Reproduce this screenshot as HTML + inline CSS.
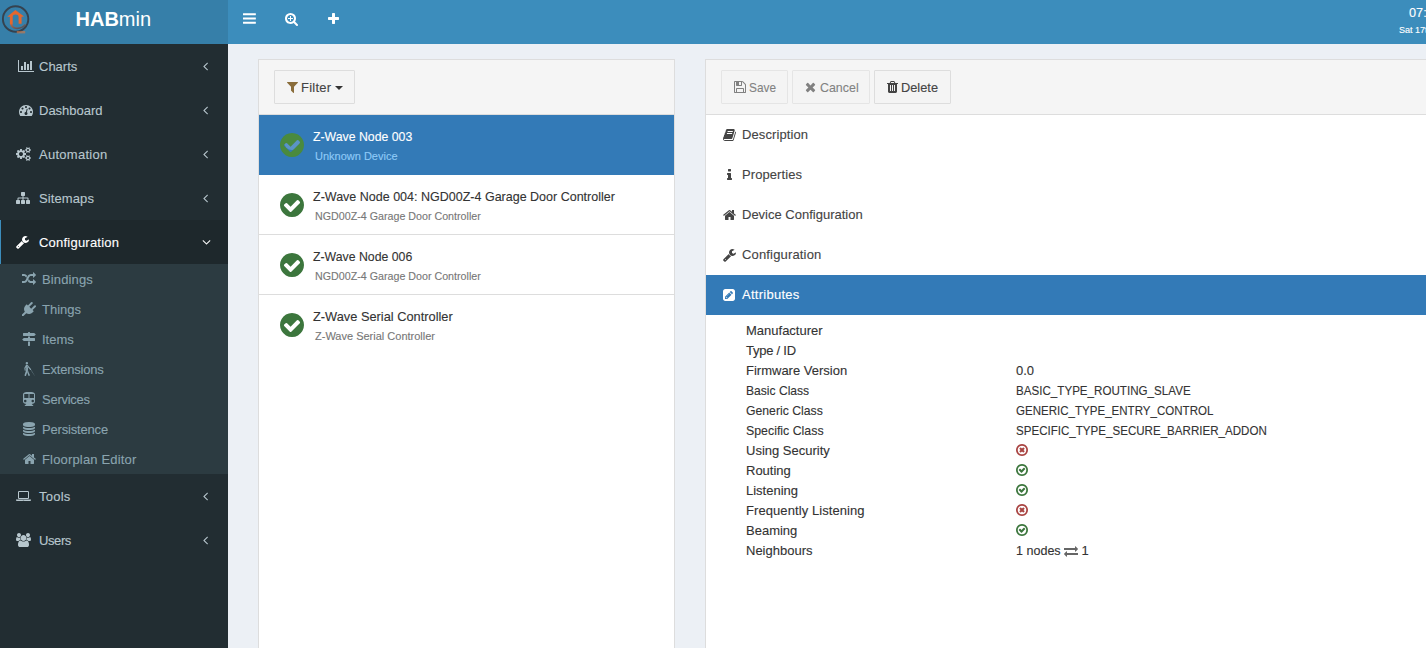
<!DOCTYPE html>
<html lang="en">
<head>
<meta charset="utf-8">
<title>HABmin</title>
<style>
*{box-sizing:border-box}
html,body{margin:0;padding:0}
body{width:1426px;height:648px;overflow:hidden;position:relative;background:#ecf0f5;
 font-family:"Liberation Sans",sans-serif;font-size:13px;color:#333;-webkit-font-smoothing:antialiased;-webkit-text-stroke:.12px currentColor}
.abs{position:absolute}
svg.i{display:block;overflow:visible}
.fw{display:inline-block;text-align:center}
.fw svg.i{display:inline-block}
.t{position:absolute;white-space:nowrap;line-height:1}
/* header */
#logo{position:absolute;left:0;top:0;width:228px;height:44px;background:#367fa9}
#nav{position:absolute;left:228px;top:0;width:1198px;height:44px;background:#3c8dbc}
#brand{-webkit-text-stroke:0;position:absolute;left:75.5px;top:7px;font-size:20px;line-height:24px;color:#fff;white-space:nowrap}
#brand b{font-weight:700}
/* sidebar */
#side{position:absolute;left:0;top:44px;width:228px;height:604px;background:#222d32}
.mi{position:absolute;left:0;width:228px;height:44px;color:#b8c7ce}
.mi.act{background:#1e282c;color:#fff;border-left:1px solid #3c8dbc}
.mi .ic{position:absolute;left:16px;top:15px;width:20px;height:14px;text-align:left}
.mi .ic.c{left:17px;width:18px;text-align:center}
.mi .ic svg{display:inline-block}
.mi .tx{position:absolute;left:39px;top:16px;font-size:13px;line-height:14px;white-space:nowrap}
.mi .ch{position:absolute;left:203px;top:15px}
#sub{position:absolute;left:0;top:220px;width:228px;height:210px;background:#2c3b41}
.si{position:absolute;left:0;width:228px;height:30px;color:#8aa4af}
.si .ic{position:absolute;left:20px;top:8px;width:18px;height:14px;text-align:center}
.si .ic svg{display:inline-block}
.si .tx{position:absolute;left:42px;top:8.6px;font-size:13px;line-height:14px;white-space:nowrap}
/* panels */
.panel{position:absolute;background:#fff;border:1px solid #ddd}
.ph{position:absolute;left:0;top:0;right:0;height:55px;background:#f5f5f5;border-bottom:1px solid #ddd}
.btn{position:absolute;top:10px;height:34px;border:1px solid #ddd;background:#f4f4f4;border-radius:1px;color:#444}
.btn.dis{opacity:.65}
.li{position:absolute;left:0;width:415px;height:60px;border-bottom:1px solid #ddd;background:#fff}
.li.last{border-bottom-color:#fff}
.li.act{background:#337ab7;border-color:#337ab7}
.li .ttl{position:absolute;left:54px;top:14px;font-size:13px;line-height:16px;white-space:nowrap;color:#333}
.li .subt{position:absolute;left:56px;top:35px;font-size:11px;line-height:12px;white-space:nowrap;color:#777}
.li.act .ttl{color:#fff}
.li.act .subt{color:#8fcaf7}
.li .ck{position:absolute;left:21px;top:16px}
.acc{position:absolute;left:0;width:720px;height:40px}
.acc.act{background:#337ab7}
.acc .ic{position:absolute;left:14.3px;top:13px;width:18px;height:14px;text-align:center}
.acc .ic svg{display:inline-block}
.acc .tx{position:absolute;left:36px;top:12px;font-size:13px;line-height:16px;white-space:nowrap;color:#444}
.acc.act .tx{color:#fff}
.row{position:absolute;left:40px;height:20px;width:680px;font-size:13px;line-height:20px;white-space:nowrap;color:#333}
.row .v{position:absolute;left:270px;top:0}

</style>
</head>
<body>
<div id="logo">
  <svg class="abs" style="left:0;top:4px" width="32" height="32" viewBox="0 0 32 32">
    <defs><linearGradient id="lg" x1="0" y1="0" x2="1" y2="1"><stop offset="0" stop-color="#e0642e"/><stop offset="1" stop-color="#3a4450"/></linearGradient></defs>
    <circle cx="15.6" cy="15" r="12.7" fill="none" stroke="#35424f" stroke-width="1.9"/>
    <path d="M7.2 12.8 L15.4 6.0 L24.1 12.5 L21.6 12.7 L21.6 19.8 L18.6 19.8 L18.6 13 Q18.4 10.6 15.6 10.6 Q12.8 10.6 12.7 13 L12.7 20.4 L9.9 20.4 L9.9 12.8 Z" fill="#e5672d"/>
    <path d="M11.3 19.5 Q11.2 23.2 15.5 24.2 Q21.5 25 25.5 20.5" fill="none" stroke="url(#lg)" stroke-width="1.7" opacity=".85"/>
    <rect x="16.8" y="27" width="8.4" height="2.4" fill="#d9763f" opacity=".6"/>
  </svg>
  <div id="brand"><b>HAB</b>min</div>
</div>
<div id="nav">
  <div class="abs" style="left:14.7px;top:11.3px"><svg class="i" width="12.86" height="15.0" viewBox="0 -1536 1536 1792" style="fill:#fff;"><path transform="scale(1,-1)" d="M1536 192v-128q0 -26 -19 -45t-45 -19h-1408q-26 0 -45 19t-19 45v128q0 26 19 45t45 19h1408q26 0 45 -19t19 -45zM1536 704v-128q0 -26 -19 -45t-45 -19h-1408q-26 0 -45 19t-19 45v128q0 26 19 45t45 19h1408q26 0 45 -19t19 -45zM1536 1216v-128q0 -26 -19 -45 t-45 -19h-1408q-26 0 -45 19t-19 45v128q0 26 19 45t45 19h1408q26 0 45 -19t19 -45z"/></svg></div>
  <div class="abs" style="left:57px;top:12px"><svg class="i" width="13.00" height="14.0" viewBox="0 -1536 1664 1792" style="fill:#fff;"><path transform="scale(1,-1)" d="M1024 736v-64q0 -13 -9.5 -22.5t-22.5 -9.5h-224v-224q0 -13 -9.5 -22.5t-22.5 -9.5h-64q-13 0 -22.5 9.5t-9.5 22.5v224h-224q-13 0 -22.5 9.5t-9.5 22.5v64q0 13 9.5 22.5t22.5 9.5h224v224q0 13 9.5 22.5t22.5 9.5h64q13 0 22.5 -9.5t9.5 -22.5v-224h224 q13 0 22.5 -9.5t9.5 -22.5zM1152 704q0 185 -131.5 316.5t-316.5 131.5t-316.5 -131.5t-131.5 -316.5t131.5 -316.5t316.5 -131.5t316.5 131.5t131.5 316.5zM1664 -128q0 -53 -37.5 -90.5t-90.5 -37.5q-54 0 -90 38l-343 342q-179 -124 -399 -124q-143 0 -273.5 55.5 t-225 150t-150 225t-55.5 273.5t55.5 273.5t150 225t225 150t273.5 55.5t273.5 -55.5t225 -150t150 -225t55.5 -273.5q0 -220 -124 -399l343 -343q37 -37 37 -90z"/></svg></div>
  <div class="abs" style="left:100px;top:12px"><svg class="i" width="11.00" height="14.0" viewBox="0 -1536 1408 1792" style="fill:#fff;"><path transform="scale(1,-1)" d="M1408 800v-192q0 -40 -28 -68t-68 -28h-416v-416q0 -40 -28 -68t-68 -28h-192q-40 0 -68 28t-28 68v416h-416q-40 0 -68 28t-28 68v192q0 40 28 68t68 28h416v416q0 40 28 68t68 28h192q40 0 68 -28t28 -68v-416h416q40 0 68 -28t28 -68z"/></svg></div>
  <div class="t" style="left:1181.3px;top:6.6px;font-size:12px;color:#fff"><span style="display:inline-block;transform:scaleX(1.06);transform-origin:0 50%">07:</span></div>
  <div class="t" style="left:1171px;top:25px;font-size:9.5px;color:#fff"><span style="display:inline-block;transform:scaleX(.95);transform-origin:0 50%">Sat 17th</span></div>
</div>
<div id="side">
  <div class="mi" style="top:0"><span class="ic c"><svg class="i" width="16.00" height="14.0" viewBox="0 -1536 2048 1792" style="fill:#b8c7ce;"><path transform="scale(1,-1)" d="M640 640v-512h-256v512h256zM1024 1152v-1024h-256v1024h256zM2048 0v-128h-2048v1536h128v-1408h1920zM1408 896v-768h-256v768h256zM1792 1280v-1152h-256v1152h256z"/></svg></span><span class="tx">Charts</span><span class="ch"><svg class="i" width="5.00" height="14.0" viewBox="0 -1536 640 1792" style="fill:#b8c7ce;"><path transform="scale(1,-1)" d="M627 992q0 -13 -10 -23l-393 -393l393 -393q10 -10 10 -23t-10 -23l-50 -50q-10 -10 -23 -10t-23 10l-466 466q-10 10 -10 23t10 23l466 466q10 10 23 10t23 -10l50 -50q10 -10 10 -23z"/></svg></span></div>
  <div class="mi" style="top:44px"><span class="ic c"><svg class="i" width="14.00" height="14.0" viewBox="0 -1536 1792 1792" style="fill:#b8c7ce;"><path transform="scale(1,-1)" d="M384 384q0 53 -37.5 90.5t-90.5 37.5t-90.5 -37.5t-37.5 -90.5t37.5 -90.5t90.5 -37.5t90.5 37.5t37.5 90.5zM576 832q0 53 -37.5 90.5t-90.5 37.5t-90.5 -37.5t-37.5 -90.5t37.5 -90.5t90.5 -37.5t90.5 37.5t37.5 90.5zM1004 351l101 382q6 26 -7.5 48.5t-38.5 29.5 t-48 -6.5t-30 -39.5l-101 -382q-60 -5 -107 -43.5t-63 -98.5q-20 -77 20 -146t117 -89t146 20t89 117q16 60 -6 117t-72 91zM1664 384q0 53 -37.5 90.5t-90.5 37.5t-90.5 -37.5t-37.5 -90.5t37.5 -90.5t90.5 -37.5t90.5 37.5t37.5 90.5zM1024 1024q0 53 -37.5 90.5 t-90.5 37.5t-90.5 -37.5t-37.5 -90.5t37.5 -90.5t90.5 -37.5t90.5 37.5t37.5 90.5zM1472 832q0 53 -37.5 90.5t-90.5 37.5t-90.5 -37.5t-37.5 -90.5t37.5 -90.5t90.5 -37.5t90.5 37.5t37.5 90.5zM1792 384q0 -261 -141 -483q-19 -29 -54 -29h-1402q-35 0 -54 29 q-141 221 -141 483q0 182 71 348t191 286t286 191t348 71t348 -71t286 -191t191 -286t71 -348z"/></svg></span><span class="tx">Dashboard</span><span class="ch"><svg class="i" width="5.00" height="14.0" viewBox="0 -1536 640 1792" style="fill:#b8c7ce;"><path transform="scale(1,-1)" d="M627 992q0 -13 -10 -23l-393 -393l393 -393q10 -10 10 -23t-10 -23l-50 -50q-10 -10 -23 -10t-23 10l-466 466q-10 10 -10 23t10 23l466 466q10 10 23 10t23 -10l50 -50q10 -10 10 -23z"/></svg></span></div>
  <div class="mi" style="top:88px"><span class="ic"><svg class="i" width="15.00" height="14.0" viewBox="0 -1536 1920 1792" style="fill:#b8c7ce;"><path transform="scale(1,-1)" d="M896 640q0 106 -75 181t-181 75t-181 -75t-75 -181t75 -181t181 -75t181 75t75 181zM1664 128q0 52 -38 90t-90 38t-90 -38t-38 -90q0 -53 37.5 -90.5t90.5 -37.5t90.5 37.5t37.5 90.5zM1664 1152q0 52 -38 90t-90 38t-90 -38t-38 -90q0 -53 37.5 -90.5t90.5 -37.5 t90.5 37.5t37.5 90.5zM1280 731v-185q0 -10 -7 -19.5t-16 -10.5l-155 -24q-11 -35 -32 -76q34 -48 90 -115q7 -11 7 -20q0 -12 -7 -19q-23 -30 -82.5 -89.5t-78.5 -59.5q-11 0 -21 7l-115 90q-37 -19 -77 -31q-11 -108 -23 -155q-7 -24 -30 -24h-186q-11 0 -20 7.5t-10 17.5 l-23 153q-34 10 -75 31l-118 -89q-7 -7 -20 -7q-11 0 -21 8q-144 133 -144 160q0 9 7 19q10 14 41 53t47 61q-23 44 -35 82l-152 24q-10 1 -17 9.5t-7 19.5v185q0 10 7 19.5t16 10.5l155 24q11 35 32 76q-34 48 -90 115q-7 11 -7 20q0 12 7 20q22 30 82 89t79 59q11 0 21 -7 l115 -90q34 18 77 32q11 108 23 154q7 24 30 24h186q11 0 20 -7.5t10 -17.5l23 -153q34 -10 75 -31l118 89q8 7 20 7q11 0 21 -8q144 -133 144 -160q0 -8 -7 -19q-12 -16 -42 -54t-45 -60q23 -48 34 -82l152 -23q10 -2 17 -10.5t7 -19.5zM1920 198v-140q0 -16 -149 -31 q-12 -27 -30 -52q51 -113 51 -138q0 -4 -4 -7q-122 -71 -124 -71q-8 0 -46 47t-52 68q-20 -2 -30 -2t-30 2q-14 -21 -52 -68t-46 -47q-2 0 -124 71q-4 3 -4 7q0 25 51 138q-18 25 -30 52q-149 15 -149 31v140q0 16 149 31q13 29 30 52q-51 113 -51 138q0 4 4 7q4 2 35 20 t59 34t30 16q8 0 46 -46.5t52 -67.5q20 2 30 2t30 -2q51 71 92 112l6 2q4 0 124 -70q4 -3 4 -7q0 -25 -51 -138q17 -23 30 -52q149 -15 149 -31zM1920 1222v-140q0 -16 -149 -31q-12 -27 -30 -52q51 -113 51 -138q0 -4 -4 -7q-122 -71 -124 -71q-8 0 -46 47t-52 68 q-20 -2 -30 -2t-30 2q-14 -21 -52 -68t-46 -47q-2 0 -124 71q-4 3 -4 7q0 25 51 138q-18 25 -30 52q-149 15 -149 31v140q0 16 149 31q13 29 30 52q-51 113 -51 138q0 4 4 7q4 2 35 20t59 34t30 16q8 0 46 -46.5t52 -67.5q20 2 30 2t30 -2q51 71 92 112l6 2q4 0 124 -70 q4 -3 4 -7q0 -25 -51 -138q17 -23 30 -52q149 -15 149 -31z"/></svg></span><span class="tx"><span style="letter-spacing:.27px">Automation</span></span><span class="ch"><svg class="i" width="5.00" height="14.0" viewBox="0 -1536 640 1792" style="fill:#b8c7ce;"><path transform="scale(1,-1)" d="M627 992q0 -13 -10 -23l-393 -393l393 -393q10 -10 10 -23t-10 -23l-50 -50q-10 -10 -23 -10t-23 10l-466 466q-10 10 -10 23t10 23l466 466q10 10 23 10t23 -10l50 -50q10 -10 10 -23z"/></svg></span></div>
  <div class="mi" style="top:132px"><span class="ic"><svg class="i" width="14.00" height="14.0" viewBox="0 -1536 1792 1792" style="fill:#b8c7ce;"><path transform="scale(1,-1)" d="M1792 288v-320q0 -40 -28 -68t-68 -28h-320q-40 0 -68 28t-28 68v320q0 40 28 68t68 28h96v192h-512v-192h96q40 0 68 -28t28 -68v-320q0 -40 -28 -68t-68 -28h-320q-40 0 -68 28t-28 68v320q0 40 28 68t68 28h96v192h-512v-192h96q40 0 68 -28t28 -68v-320 q0 -40 -28 -68t-68 -28h-320q-40 0 -68 28t-28 68v320q0 40 28 68t68 28h96v192q0 52 38 90t90 38h512v192h-96q-40 0 -68 28t-28 68v320q0 40 28 68t68 28h320q40 0 68 -28t28 -68v-320q0 -40 -28 -68t-68 -28h-96v-192h512q52 0 90 -38t38 -90v-192h96q40 0 68 -28t28 -68 z"/></svg></span><span class="tx"><span style="letter-spacing:.1px">Sitemaps</span></span><span class="ch"><svg class="i" width="5.00" height="14.0" viewBox="0 -1536 640 1792" style="fill:#b8c7ce;"><path transform="scale(1,-1)" d="M627 992q0 -13 -10 -23l-393 -393l393 -393q10 -10 10 -23t-10 -23l-50 -50q-10 -10 -23 -10t-23 10l-466 466q-10 10 -10 23t10 23l466 466q10 10 23 10t23 -10l50 -50q10 -10 10 -23z"/></svg></span></div>
  <div class="mi act" style="top:176px"><span class="ic" style="left:15px"><svg class="i" width="13.00" height="14.0" viewBox="0 -1536 1664 1792" style="fill:#fff;"><path transform="scale(1,-1)" d="M384 64q0 26 -19 45t-45 19t-45 -19t-19 -45t19 -45t45 -19t45 19t19 45zM1028 484l-682 -682q-37 -37 -90 -37q-52 0 -91 37l-106 108q-38 36 -38 90q0 53 38 91l681 681q39 -98 114.5 -173.5t173.5 -114.5zM1662 919q0 -39 -23 -106q-47 -134 -164.5 -217.5 t-258.5 -83.5q-185 0 -316.5 131.5t-131.5 316.5t131.5 316.5t316.5 131.5q58 0 121.5 -16.5t107.5 -46.5q16 -11 16 -28t-16 -28l-293 -169v-224l193 -107q5 3 79 48.5t135.5 81t70.5 35.5q15 0 23.5 -10t8.5 -25z"/></svg></span><span class="tx" style="left:38px"><span style="letter-spacing:.22px">Configuration</span></span><span class="ch" style="left:201px"><svg class="i" width="9.00" height="14.0" viewBox="0 -1536 1152 1792" style="fill:#fff;"><path transform="scale(1,-1)" d="M1075 800q0 -13 -10 -23l-466 -466q-10 -10 -23 -10t-23 10l-466 466q-10 10 -10 23t10 23l50 50q10 10 23 10t23 -10l393 -393l393 393q10 10 23 10t23 -10l50 -50q10 -10 10 -23z"/></svg></span></div>
  <div id="sub">
    <div class="si" style="top:0"><span class="ic"><svg class="i" width="14.00" height="14.0" viewBox="0 -1536 1792 1792" style="fill:#8aa4af;"><path transform="scale(1,-1)" d="M666 1055q-60 -92 -137 -273q-22 45 -37 72.5t-40.5 63.5t-51 56.5t-63 35t-81.5 14.5h-224q-14 0 -23 9t-9 23v192q0 14 9 23t23 9h224q250 0 410 -225zM1792 256q0 -14 -9 -23l-320 -320q-9 -9 -23 -9q-13 0 -22.5 9.5t-9.5 22.5v192q-32 0 -85 -0.5t-81 -1t-73 1 t-71 5t-64 10.5t-63 18.5t-58 28.5t-59 40t-55 53.5t-56 69.5q59 93 136 273q22 -45 37 -72.5t40.5 -63.5t51 -56.5t63 -35t81.5 -14.5h256v192q0 14 9 23t23 9q12 0 24 -10l319 -319q9 -9 9 -23zM1792 1152q0 -14 -9 -23l-320 -320q-9 -9 -23 -9q-13 0 -22.5 9.5t-9.5 22.5 v192h-256q-48 0 -87 -15t-69 -45t-51 -61.5t-45 -77.5q-32 -62 -78 -171q-29 -66 -49.5 -111t-54 -105t-64 -100t-74 -83t-90 -68.5t-106.5 -42t-128 -16.5h-224q-14 0 -23 9t-9 23v192q0 14 9 23t23 9h224q48 0 87 15t69 45t51 61.5t45 77.5q32 62 78 171q29 66 49.5 111 t54 105t64 100t74 83t90 68.5t106.5 42t128 16.5h256v192q0 14 9 23t23 9q12 0 24 -10l319 -319q9 -9 9 -23z"/></svg></span><span class="tx"><span style="letter-spacing:.14px">Bindings</span></span></div>
    <div class="si" style="top:30px"><span class="ic"><svg class="i" width="14.00" height="14.0" viewBox="0 -1536 1792 1792" style="fill:#8aa4af;"><path transform="scale(1,-1)" d="M1755 1083q37 -38 37 -90.5t-37 -90.5l-401 -400l150 -150l-160 -160q-163 -163 -389.5 -186.5t-411.5 100.5l-362 -362h-181v181l362 362q-124 185 -100.5 411.5t186.5 389.5l160 160l150 -150l400 401q38 37 91 37t90 -37t37 -90.5t-37 -90.5l-400 -401l234 -234 l401 400q38 37 91 37t90 -37z"/></svg></span><span class="tx">Things</span></div>
    <div class="si" style="top:60px"><span class="ic"><svg class="i" width="14.00" height="14.0" viewBox="0 -1536 1792 1792" style="fill:#8aa4af;"><path transform="scale(1,-1)" d="M1745 1239q10 -10 10 -23t-10 -23l-141 -141q-28 -28 -68 -28h-1344q-26 0 -45 19t-19 45v256q0 26 19 45t45 19h576v64q0 26 19 45t45 19h128q26 0 45 -19t19 -45v-64h512q40 0 68 -28zM768 320h256v-512q0 -26 -19 -45t-45 -19h-128q-26 0 -45 19t-19 45v512zM1600 768 q26 0 45 -19t19 -45v-256q0 -26 -19 -45t-45 -19h-1344q-40 0 -68 28l-141 141q-10 10 -10 23t10 23l141 141q28 28 68 28h512v192h256v-192h576z"/></svg></span><span class="tx">Items</span></div>
    <div class="si" style="top:90px"><span class="ic"><svg class="i" width="11.00" height="14.0" viewBox="0 -1536 1408 1792" style="fill:#8aa4af;"><path transform="scale(1,-1)" d="M366 1225q-64 0 -110 45.5t-46 110.5q0 64 46 109.5t110 45.5t109.5 -45.5t45.5 -109.5q0 -65 -45.5 -110.5t-109.5 -45.5zM917 583q0 -50 -30 -67.5t-63.5 -6.5t-47.5 34l-367 438q-7 12 -14 15.5t-11 1.5l-3 -3q-7 -8 4 -21l122 -139l1 -354l-161 -457 q-67 -192 -92 -234q-15 -26 -28 -32q-50 -26 -103 -1q-29 13 -41.5 43t-9.5 57q2 17 197 618l5 416l-85 -164l35 -222q4 -24 -1 -42t-14 -27.5t-19 -16t-17 -7.5l-7 -2q-19 -3 -34.5 3t-24 16t-14 22t-7.5 19.5t-2 9.5l-46 299l211 381q23 34 113 34q75 0 107 -40l424 -521 q7 -5 14 -17l3 -3l-1 -1q7 -13 7 -29zM514 433q43 -113 88.5 -225t69.5 -168l24 -55q36 -93 42 -125q11 -70 -36 -97q-35 -22 -66 -16t-51 22t-29 35h-1q-6 16 -8 25l-124 351zM1338 -159q31 -49 31 -57q0 -5 -3 -7q-9 -5 -14.5 0.5t-15.5 26t-16 30.5q-114 172 -423 661 q3 -1 7 1t7 4l3 2q11 9 11 17z"/></svg></span><span class="tx"><span style="letter-spacing:-.2px">Extensions</span></span></div>
    <div class="si" style="top:120px"><span class="ic"><svg class="i" width="12.00" height="14.0" viewBox="0 -1536 1536 1792" style="fill:#8aa4af;"><path transform="scale(1,-1)" d="M1088 1536q185 0 316.5 -93.5t131.5 -226.5v-896q0 -130 -125.5 -222t-305.5 -97l213 -202q16 -15 8 -35t-30 -20h-1056q-22 0 -30 20t8 35l213 202q-180 5 -305.5 97t-125.5 222v896q0 133 131.5 226.5t316.5 93.5h640zM288 224q66 0 113 47t47 113t-47 113t-113 47 t-113 -47t-47 -113t47 -113t113 -47zM704 768v512h-544v-512h544zM1248 224q66 0 113 47t47 113t-47 113t-113 47t-113 -47t-47 -113t47 -113t113 -47zM1408 768v512h-576v-512h576z"/></svg></span><span class="tx"><span style="letter-spacing:-.26px">Services</span></span></div>
    <div class="si" style="top:150px"><span class="ic"><svg class="i" width="12.00" height="14.0" viewBox="0 -1536 1536 1792" style="fill:#8aa4af;"><path transform="scale(1,-1)" d="M768 768q237 0 443 43t325 127v-170q0 -69 -103 -128t-280 -93.5t-385 -34.5t-385 34.5t-280 93.5t-103 128v170q119 -84 325 -127t443 -43zM768 0q237 0 443 43t325 127v-170q0 -69 -103 -128t-280 -93.5t-385 -34.5t-385 34.5t-280 93.5t-103 128v170q119 -84 325 -127 t443 -43zM768 384q237 0 443 43t325 127v-170q0 -69 -103 -128t-280 -93.5t-385 -34.5t-385 34.5t-280 93.5t-103 128v170q119 -84 325 -127t443 -43zM768 1536q208 0 385 -34.5t280 -93.5t103 -128v-128q0 -69 -103 -128t-280 -93.5t-385 -34.5t-385 34.5t-280 93.5 t-103 128v128q0 69 103 128t280 93.5t385 34.5z"/></svg></span><span class="tx"><span style="letter-spacing:-.18px">Persistence</span></span></div>
    <div class="si" style="top:180px"><span class="ic"><svg class="i" width="13.00" height="14.0" viewBox="0 -1536 1664 1792" style="fill:#8aa4af;"><path transform="scale(1,-1)" d="M1408 544v-480q0 -26 -19 -45t-45 -19h-384v384h-256v-384h-384q-26 0 -45 19t-19 45v480q0 1 0.5 3t0.5 3l575 474l575 -474q1 -2 1 -6zM1631 613l-62 -74q-8 -9 -21 -11h-3q-13 0 -21 7l-692 577l-692 -577q-12 -8 -24 -7q-13 2 -21 11l-62 74q-8 10 -7 23.5t11 21.5 l719 599q32 26 76 26t76 -26l244 -204v195q0 14 9 23t23 9h192q14 0 23 -9t9 -23v-408l219 -182q10 -8 11 -21.5t-7 -23.5z"/></svg></span><span class="tx"><span style="letter-spacing:.17px">Floorplan Editor</span></span></div>
  </div>
  <div class="mi" style="top:430px"><span class="ic"><svg class="i" width="15.00" height="14.0" viewBox="0 -1536 1920 1792" style="fill:#b8c7ce;"><path transform="scale(1,-1)" d="M416 256q-66 0 -113 47t-47 113v704q0 66 47 113t113 47h1088q66 0 113 -47t47 -113v-704q0 -66 -47 -113t-113 -47h-1088zM384 1120v-704q0 -13 9.5 -22.5t22.5 -9.5h1088q13 0 22.5 9.5t9.5 22.5v704q0 13 -9.5 22.5t-22.5 9.5h-1088q-13 0 -22.5 -9.5t-9.5 -22.5z M1760 192h160v-96q0 -40 -47 -68t-113 -28h-1600q-66 0 -113 28t-47 68v96h160h1600zM1040 96q16 0 16 16t-16 16h-160q-16 0 -16 -16t16 -16h160z"/></svg></span><span class="tx"><span style="letter-spacing:.25px">Tools</span></span><span class="ch"><svg class="i" width="5.00" height="14.0" viewBox="0 -1536 640 1792" style="fill:#b8c7ce;"><path transform="scale(1,-1)" d="M627 992q0 -13 -10 -23l-393 -393l393 -393q10 -10 10 -23t-10 -23l-50 -50q-10 -10 -23 -10t-23 10l-466 466q-10 10 -10 23t10 23l466 466q10 10 23 10t23 -10l50 -50q10 -10 10 -23z"/></svg></span></div>
  <div class="mi" style="top:474px"><span class="ic"><svg class="i" width="15.00" height="14.0" viewBox="0 -1536 1920 1792" style="fill:#b8c7ce;"><path transform="scale(1,-1)" d="M593 640q-162 -5 -265 -128h-134q-82 0 -138 40.5t-56 118.5q0 353 124 353q6 0 43.5 -21t97.5 -42.5t119 -21.5q67 0 133 23q-5 -37 -5 -66q0 -139 81 -256zM1664 3q0 -120 -73 -189.5t-194 -69.5h-874q-121 0 -194 69.5t-73 189.5q0 53 3.5 103.5t14 109t26.5 108.5 t43 97.5t62 81t85.5 53.5t111.5 20q10 0 43 -21.5t73 -48t107 -48t135 -21.5t135 21.5t107 48t73 48t43 21.5q61 0 111.5 -20t85.5 -53.5t62 -81t43 -97.5t26.5 -108.5t14 -109t3.5 -103.5zM640 1280q0 -106 -75 -181t-181 -75t-181 75t-75 181t75 181t181 75t181 -75 t75 -181zM1344 896q0 -159 -112.5 -271.5t-271.5 -112.5t-271.5 112.5t-112.5 271.5t112.5 271.5t271.5 112.5t271.5 -112.5t112.5 -271.5zM1920 671q0 -78 -56 -118.5t-138 -40.5h-134q-103 123 -265 128q81 117 81 256q0 29 -5 66q66 -23 133 -23q59 0 119 21.5t97.5 42.5 t43.5 21q124 0 124 -353zM1792 1280q0 -106 -75 -181t-181 -75t-181 75t-75 181t75 181t181 75t181 -75t75 -181z"/></svg></span><span class="tx"><span style="letter-spacing:-.4px">Users</span></span><span class="ch"><svg class="i" width="5.00" height="14.0" viewBox="0 -1536 640 1792" style="fill:#b8c7ce;"><path transform="scale(1,-1)" d="M627 992q0 -13 -10 -23l-393 -393l393 -393q10 -10 10 -23t-10 -23l-50 -50q-10 -10 -23 -10t-23 10l-466 466q-10 10 -10 23t10 23l466 466q10 10 23 10t23 -10l50 -50q10 -10 10 -23z"/></svg></span></div>
</div>

<div class="panel" id="pl" style="left:258px;top:59px;width:417px;height:600px">
  <div class="ph">
    <div class="btn" style="left:15px;width:81px">
      <span class="abs" style="left:12px;top:9px"><svg class="i" width="11.00" height="14.0" viewBox="0 -1536 1408 1792" style="fill:#8a6d3b;"><path transform="scale(1,-1)" d="M1403 1241q17 -41 -14 -70l-493 -493v-742q0 -42 -39 -59q-13 -5 -25 -5q-27 0 -45 19l-256 256q-19 19 -19 45v486l-493 493q-31 29 -14 70q17 39 59 39h1280q42 0 59 -39z"/></svg></span>
      <span class="t" style="left:26px;top:9.6px;font-size:13px"><span style="letter-spacing:.25px">Filter</span></span>
      <span class="abs" style="left:60px;top:15px;width:0;height:0;border-left:4px solid transparent;border-right:4px solid transparent;border-top:4px solid #333"></span>
    </div>
  </div>
  <div class="li act" style="top:55px"><span class="abs" style="left:25px;top:19px;width:16px;height:16px;border-radius:8px;background:rgba(255,255,255,.2)"></span><span class="ck"><svg class="i" width="24.00" height="28.0" viewBox="0 -1536 1536 1792" style="fill:#4a8a3e;"><path transform="scale(1,-1)" d="M1284 802q0 28 -18 46l-91 90q-19 19 -45 19t-45 -19l-408 -407l-226 226q-19 19 -45 19t-45 -19l-91 -90q-18 -18 -18 -46q0 -27 18 -45l362 -362q19 -19 45 -19q27 0 46 19l543 543q18 18 18 45zM1536 640q0 -209 -103 -385.5t-279.5 -279.5t-385.5 -103t-385.5 103 t-279.5 279.5t-103 385.5t103 385.5t279.5 279.5t385.5 103t385.5 -103t279.5 -279.5t103 -385.5z"/></svg></span><span class="ttl"><span style="display:inline-block;transform:scaleX(.945);transform-origin:0 50%">Z-Wave Node 003</span></span><span class="subt">Unknown Device</span></div>
  <div class="li" style="top:115px"><span class="ck"><svg class="i" width="24.00" height="28.0" viewBox="0 -1536 1536 1792" style="fill:#3c763d;"><path transform="scale(1,-1)" d="M1284 802q0 28 -18 46l-91 90q-19 19 -45 19t-45 -19l-408 -407l-226 226q-19 19 -45 19t-45 -19l-91 -90q-18 -18 -18 -46q0 -27 18 -45l362 -362q19 -19 45 -19q27 0 46 19l543 543q18 18 18 45zM1536 640q0 -209 -103 -385.5t-279.5 -279.5t-385.5 -103t-385.5 103 t-279.5 279.5t-103 385.5t103 385.5t279.5 279.5t385.5 103t385.5 -103t279.5 -279.5t103 -385.5z"/></svg></span><span class="ttl"><span style="display:inline-block;transform:scaleX(.962);transform-origin:0 50%">Z-Wave Node 004: NGD00Z-4 Garage Door Controller</span></span><span class="subt"><span style="display:inline-block;transform:scaleX(.972);transform-origin:0 50%">NGD00Z-4 Garage Door Controller</span></span></div>
  <div class="li" style="top:175px"><span class="ck"><svg class="i" width="24.00" height="28.0" viewBox="0 -1536 1536 1792" style="fill:#3c763d;"><path transform="scale(1,-1)" d="M1284 802q0 28 -18 46l-91 90q-19 19 -45 19t-45 -19l-408 -407l-226 226q-19 19 -45 19t-45 -19l-91 -90q-18 -18 -18 -46q0 -27 18 -45l362 -362q19 -19 45 -19q27 0 46 19l543 543q18 18 18 45zM1536 640q0 -209 -103 -385.5t-279.5 -279.5t-385.5 -103t-385.5 103 t-279.5 279.5t-103 385.5t103 385.5t279.5 279.5t385.5 103t385.5 -103t279.5 -279.5t103 -385.5z"/></svg></span><span class="ttl"><span style="display:inline-block;transform:scaleX(.945);transform-origin:0 50%">Z-Wave Node 006</span></span><span class="subt"><span style="display:inline-block;transform:scaleX(.972);transform-origin:0 50%">NGD00Z-4 Garage Door Controller</span></span></div>
  <div class="li last" style="top:235px"><span class="ck"><svg class="i" width="24.00" height="28.0" viewBox="0 -1536 1536 1792" style="fill:#3c763d;"><path transform="scale(1,-1)" d="M1284 802q0 28 -18 46l-91 90q-19 19 -45 19t-45 -19l-408 -407l-226 226q-19 19 -45 19t-45 -19l-91 -90q-18 -18 -18 -46q0 -27 18 -45l362 -362q19 -19 45 -19q27 0 46 19l543 543q18 18 18 45zM1536 640q0 -209 -103 -385.5t-279.5 -279.5t-385.5 -103t-385.5 103 t-279.5 279.5t-103 385.5t103 385.5t279.5 279.5t385.5 103t385.5 -103t279.5 -279.5t103 -385.5z"/></svg></span><span class="ttl"><span style="display:inline-block;transform:scaleX(.985);transform-origin:0 50%">Z-Wave Serial Controller</span></span><span class="subt">Z-Wave Serial Controller</span></div>
</div>

<div class="panel" id="pr" style="left:705px;top:59px;width:740px;height:600px">
  <div class="ph">
    <div class="btn dis" style="left:15px;width:67px">
      <span class="abs" style="left:11.5px;top:9px"><svg class="i" width="12.00" height="14.0" viewBox="0 -1536 1536 1792" style="fill:#444;"><path transform="scale(1,-1)" d="M384 0h768v384h-768v-384zM1280 0h128v896q0 14 -10 38.5t-20 34.5l-281 281q-10 10 -34 20t-39 10v-416q0 -40 -28 -68t-68 -28h-576q-40 0 -68 28t-28 68v416h-128v-1280h128v416q0 40 28 68t68 28h832q40 0 68 -28t28 -68v-416zM896 928v320q0 13 -9.5 22.5t-22.5 9.5 h-192q-13 0 -22.5 -9.5t-9.5 -22.5v-320q0 -13 9.5 -22.5t22.5 -9.5h192q13 0 22.5 9.5t9.5 22.5zM1536 896v-928q0 -40 -28 -68t-68 -28h-1344q-40 0 -68 28t-28 68v1344q0 40 28 68t68 28h928q40 0 88 -20t76 -48l280 -280q28 -28 48 -76t20 -88z"/></svg></span>
      <span class="t" style="left:27px;top:9.6px;font-size:13px"><span style="display:inline-block;transform:scaleX(.91);transform-origin:0 50%">Save</span></span>
    </div>
    <div class="btn dis" style="left:86px;width:78px">
      <span class="abs" style="left:12px;top:8.5px"><svg class="i" width="11.00" height="14.0" viewBox="0 -1536 1408 1792" style="fill:#444;"><path transform="scale(1,-1)" d="M1298 214q0 -40 -28 -68l-136 -136q-28 -28 -68 -28t-68 28l-294 294l-294 -294q-28 -28 -68 -28t-68 28l-136 136q-28 28 -28 68t28 68l294 294l-294 294q-28 28 -28 68t28 68l136 136q28 28 68 28t68 -28l294 -294l294 294q28 28 68 28t68 -28l136 -136q28 -28 28 -68 t-28 -68l-294 -294l294 -294q28 -28 28 -68z"/></svg></span>
      <span class="t" style="left:26.5px;top:9.6px;font-size:13px"><span style="display:inline-block;transform:scaleX(.955);transform-origin:0 50%">Cancel</span></span>
    </div>
    <div class="btn" style="left:168px;width:77px">
      <span class="abs" style="left:11.8px;top:9px"><svg class="i" width="11.00" height="14.0" viewBox="0 -1536 1408 1792" style="fill:#444;"><path transform="scale(1,-1)" d="M512 160v704q0 14 -9 23t-23 9h-64q-14 0 -23 -9t-9 -23v-704q0 -14 9 -23t23 -9h64q14 0 23 9t9 23zM768 160v704q0 14 -9 23t-23 9h-64q-14 0 -23 -9t-9 -23v-704q0 -14 9 -23t23 -9h64q14 0 23 9t9 23zM1024 160v704q0 14 -9 23t-23 9h-64q-14 0 -23 -9t-9 -23v-704 q0 -14 9 -23t23 -9h64q14 0 23 9t9 23zM480 1152h448l-48 117q-7 9 -17 11h-317q-10 -2 -17 -11zM1408 1120v-64q0 -14 -9 -23t-23 -9h-96v-948q0 -83 -47 -143.5t-113 -60.5h-832q-66 0 -113 58.5t-47 141.5v952h-96q-14 0 -23 9t-9 23v64q0 14 9 23t23 9h309l70 167 q15 37 54 63t79 26h320q40 0 79 -26t54 -63l70 -167h309q14 0 23 -9t9 -23z"/></svg></span>
      <span class="t" style="left:26.2px;top:9.6px;font-size:13px"><span style="display:inline-block;transform:scaleX(.985);transform-origin:0 50%">Delete</span></span>
    </div>
  </div>
  <div class="acc" style="top:55px"><span class="ic"><svg class="i" width="13.00" height="14.0" viewBox="0 -1536 1664 1792" style="fill:#444;"><path transform="scale(1,-1)" d="M1639 1058q40 -57 18 -129l-275 -906q-19 -64 -76.5 -107.5t-122.5 -43.5h-923q-77 0 -148.5 53.5t-99.5 131.5q-24 67 -2 127q0 4 3 27t4 37q1 8 -3 21.5t-3 19.5q2 11 8 21t16.5 23.5t16.5 23.5q23 38 45 91.5t30 91.5q3 10 0.5 30t-0.5 28q3 11 17 28t17 23 q21 36 42 92t25 90q1 9 -2.5 32t0.5 28q4 13 22 30.5t22 22.5q19 26 42.5 84.5t27.5 96.5q1 8 -3 25.5t-2 26.5q2 8 9 18t18 23t17 21q8 12 16.5 30.5t15 35t16 36t19.5 32t26.5 23.5t36 11.5t47.5 -5.5l-1 -3q38 9 51 9h761q74 0 114 -56t18 -130l-274 -906 q-36 -119 -71.5 -153.5t-128.5 -34.5h-869q-27 0 -38 -15q-11 -16 -1 -43q24 -70 144 -70h923q29 0 56 15.5t35 41.5l300 987q7 22 5 57q38 -15 59 -43zM575 1056q-4 -13 2 -22.5t20 -9.5h608q13 0 25.5 9.5t16.5 22.5l21 64q4 13 -2 22.5t-20 9.5h-608q-13 0 -25.5 -9.5 t-16.5 -22.5zM492 800q-4 -13 2 -22.5t20 -9.5h608q13 0 25.5 9.5t16.5 22.5l21 64q4 13 -2 22.5t-20 9.5h-608q-13 0 -25.5 -9.5t-16.5 -22.5z"/></svg></span><span class="tx"><span style="letter-spacing:.1px">Description</span></span></div>
  <div class="acc" style="top:95px"><span class="ic"><svg class="i" width="5.00" height="14.0" viewBox="0 -1536 640 1792" style="fill:#444;"><path transform="scale(1,-1)" d="M640 192v-128q0 -26 -19 -45t-45 -19h-512q-26 0 -45 19t-19 45v128q0 26 19 45t45 19h64v384h-64q-26 0 -45 19t-19 45v128q0 26 19 45t45 19h384q26 0 45 -19t19 -45v-576h64q26 0 45 -19t19 -45zM512 1344v-192q0 -26 -19 -45t-45 -19h-256q-26 0 -45 19t-19 45v192 q0 26 19 45t45 19h256q26 0 45 -19t19 -45z"/></svg></span><span class="tx"><span style="letter-spacing:.08px">Properties</span></span></div>
  <div class="acc" style="top:135px"><span class="ic"><svg class="i" width="13.00" height="14.0" viewBox="0 -1536 1664 1792" style="fill:#444;"><path transform="scale(1,-1)" d="M1408 544v-480q0 -26 -19 -45t-45 -19h-384v384h-256v-384h-384q-26 0 -45 19t-19 45v480q0 1 0.5 3t0.5 3l575 474l575 -474q1 -2 1 -6zM1631 613l-62 -74q-8 -9 -21 -11h-3q-13 0 -21 7l-692 577l-692 -577q-12 -8 -24 -7q-13 2 -21 11l-62 74q-8 10 -7 23.5t11 21.5 l719 599q32 26 76 26t76 -26l244 -204v195q0 14 9 23t23 9h192q14 0 23 -9t9 -23v-408l219 -182q10 -8 11 -21.5t-7 -23.5z"/></svg></span><span class="tx">Device Configuration</span></div>
  <div class="acc" style="top:175px"><span class="ic"><svg class="i" width="13.00" height="14.0" viewBox="0 -1536 1664 1792" style="fill:#444;"><path transform="scale(1,-1)" d="M384 64q0 26 -19 45t-45 19t-45 -19t-19 -45t19 -45t45 -19t45 19t19 45zM1028 484l-682 -682q-37 -37 -90 -37q-52 0 -91 37l-106 108q-38 36 -38 90q0 53 38 91l681 681q39 -98 114.5 -173.5t173.5 -114.5zM1662 919q0 -39 -23 -106q-47 -134 -164.5 -217.5 t-258.5 -83.5q-185 0 -316.5 131.5t-131.5 316.5t131.5 316.5t316.5 131.5q58 0 121.5 -16.5t107.5 -46.5q16 -11 16 -28t-16 -28l-293 -169v-224l193 -107q5 3 79 48.5t135.5 81t70.5 35.5q15 0 23.5 -10t8.5 -25z"/></svg></span><span class="tx"><span style="letter-spacing:.16px">Configuration</span></span></div>
  <div class="acc act" style="top:215px"><span class="ic"><svg class="i" width="12.00" height="14.0" viewBox="0 -1536 1536 1792" style="fill:#fff;"><path transform="scale(1,-1)" d="M404 428l152 -152l-52 -52h-56v96h-96v56zM818 818q14 -13 -3 -30l-291 -291q-17 -17 -30 -3q-14 13 3 30l291 291q17 17 30 3zM544 128l544 544l-288 288l-544 -544v-288h288zM1152 736l92 92q28 28 28 68t-28 68l-152 152q-28 28 -68 28t-68 -28l-92 -92zM1536 1120 v-960q0 -119 -84.5 -203.5t-203.5 -84.5h-960q-119 0 -203.5 84.5t-84.5 203.5v960q0 119 84.5 203.5t203.5 84.5h960q119 0 203.5 -84.5t84.5 -203.5z"/></svg></span><span class="tx"><span style="letter-spacing:.27px">Attributes</span></span></div>
  <div class="row" style="top:261px">Manufacturer</div>
  <div class="row" style="top:281px"><span style="letter-spacing:-.25px">Type / ID</span></div>
  <div class="row" style="top:301px">Firmware Version<span class="v">0.0</span></div>
  <div class="row" style="top:321px"><span style="display:inline-block;transform:scaleX(.93);transform-origin:0 50%">Basic Class</span><span class="v"><span style="display:inline-block;transform:scaleX(.893);transform-origin:0 50%">BASIC_TYPE_ROUTING_SLAVE</span></span></div>
  <div class="row" style="top:341px"><span style="display:inline-block;transform:scaleX(.94);transform-origin:0 50%">Generic Class</span><span class="v"><span style="display:inline-block;transform:scaleX(.888);transform-origin:0 50%">GENERIC_TYPE_ENTRY_CONTROL</span></span></div>
  <div class="row" style="top:361px"><span style="display:inline-block;transform:scaleX(.95);transform-origin:0 50%">Specific Class</span><span class="v"><span style="display:inline-block;transform:scaleX(.89);transform-origin:0 50%">SPECIFIC_TYPE_SECURE_BARRIER_ADDON</span></span></div>
  <div class="row" style="top:381px">Using Security<span class="v" style="top:2px"><svg class="i" width="12.00" height="14.0" viewBox="0 -1536 1536 1792" style="fill:#a94442;"><path transform="scale(1,-1)" d="M1097 457l-146 -146q-10 -10 -23 -10t-23 10l-137 137l-137 -137q-10 -10 -23 -10t-23 10l-146 146q-10 10 -10 23t10 23l137 137l-137 137q-10 10 -10 23t10 23l146 146q10 10 23 10t23 -10l137 -137l137 137q10 10 23 10t23 -10l146 -146q10 -10 10 -23t-10 -23 l-137 -137l137 -137q10 -10 10 -23t-10 -23zM1312 640q0 148 -73 273t-198 198t-273 73t-273 -73t-198 -198t-73 -273t73 -273t198 -198t273 -73t273 73t198 198t73 273zM1536 640q0 -209 -103 -385.5t-279.5 -279.5t-385.5 -103t-385.5 103t-279.5 279.5t-103 385.5 t103 385.5t279.5 279.5t385.5 103t385.5 -103t279.5 -279.5t103 -385.5z"/></svg></span></div>
  <div class="row" style="top:401px">Routing<span class="v" style="top:2px"><svg class="i" width="12.00" height="14.0" viewBox="0 -1536 1536 1792" style="fill:#3c763d;"><path transform="scale(1,-1)" d="M1171 723l-422 -422q-19 -19 -45 -19t-45 19l-294 294q-19 19 -19 45t19 45l102 102q19 19 45 19t45 -19l147 -147l275 275q19 19 45 19t45 -19l102 -102q19 -19 19 -45t-19 -45zM1312 640q0 148 -73 273t-198 198t-273 73t-273 -73t-198 -198t-73 -273t73 -273t198 -198 t273 -73t273 73t198 198t73 273zM1536 640q0 -209 -103 -385.5t-279.5 -279.5t-385.5 -103t-385.5 103t-279.5 279.5t-103 385.5t103 385.5t279.5 279.5t385.5 103t385.5 -103t279.5 -279.5t103 -385.5z"/></svg></span></div>
  <div class="row" style="top:421px">Listening<span class="v" style="top:2px"><svg class="i" width="12.00" height="14.0" viewBox="0 -1536 1536 1792" style="fill:#3c763d;"><path transform="scale(1,-1)" d="M1171 723l-422 -422q-19 -19 -45 -19t-45 19l-294 294q-19 19 -19 45t19 45l102 102q19 19 45 19t45 -19l147 -147l275 275q19 19 45 19t45 -19l102 -102q19 -19 19 -45t-19 -45zM1312 640q0 148 -73 273t-198 198t-273 73t-273 -73t-198 -198t-73 -273t73 -273t198 -198 t273 -73t273 73t198 198t73 273zM1536 640q0 -209 -103 -385.5t-279.5 -279.5t-385.5 -103t-385.5 103t-279.5 279.5t-103 385.5t103 385.5t279.5 279.5t385.5 103t385.5 -103t279.5 -279.5t103 -385.5z"/></svg></span></div>
  <div class="row" style="top:441px"><span style="letter-spacing:.08px">Frequently Listening</span><span class="v" style="top:2px"><svg class="i" width="12.00" height="14.0" viewBox="0 -1536 1536 1792" style="fill:#a94442;"><path transform="scale(1,-1)" d="M1097 457l-146 -146q-10 -10 -23 -10t-23 10l-137 137l-137 -137q-10 -10 -23 -10t-23 10l-146 146q-10 10 -10 23t10 23l137 137l-137 137q-10 10 -10 23t10 23l146 146q10 10 23 10t23 -10l137 -137l137 137q10 10 23 10t23 -10l146 -146q10 -10 10 -23t-10 -23 l-137 -137l137 -137q10 -10 10 -23t-10 -23zM1312 640q0 148 -73 273t-198 198t-273 73t-273 -73t-198 -198t-73 -273t73 -273t198 -198t273 -73t273 73t198 198t73 273zM1536 640q0 -209 -103 -385.5t-279.5 -279.5t-385.5 -103t-385.5 103t-279.5 279.5t-103 385.5 t103 385.5t279.5 279.5t385.5 103t385.5 -103t279.5 -279.5t103 -385.5z"/></svg></span></div>
  <div class="row" style="top:461px">Beaming<span class="v" style="top:2px"><svg class="i" width="12.00" height="14.0" viewBox="0 -1536 1536 1792" style="fill:#3c763d;"><path transform="scale(1,-1)" d="M1171 723l-422 -422q-19 -19 -45 -19t-45 19l-294 294q-19 19 -19 45t19 45l102 102q19 19 45 19t45 -19l147 -147l275 275q19 19 45 19t45 -19l102 -102q19 -19 19 -45t-19 -45zM1312 640q0 148 -73 273t-198 198t-273 73t-273 -73t-198 -198t-73 -273t73 -273t198 -198 t273 -73t273 73t198 198t73 273zM1536 640q0 -209 -103 -385.5t-279.5 -279.5t-385.5 -103t-385.5 103t-279.5 279.5t-103 385.5t103 385.5t279.5 279.5t385.5 103t385.5 -103t279.5 -279.5t103 -385.5z"/></svg></span></div>
  <div class="row" style="top:481px">Neighbours<span class="v"><span style="display:inline-block;transform:scaleX(.965);transform-origin:0 50%">1 nodes</span><span class="abs" style="left:48px;top:3px"><svg class="i" width="14.00" height="14.0" viewBox="0 -1536 1792 1792" style="fill:#666;"><path transform="scale(1,-1)" d="M1792 352v-192q0 -13 -9.5 -22.5t-22.5 -9.5h-1376v-192q0 -13 -9.5 -22.5t-22.5 -9.5q-12 0 -24 10l-319 320q-9 9 -9 22q0 14 9 23l320 320q9 9 23 9q13 0 22.5 -9.5t9.5 -22.5v-192h1376q13 0 22.5 -9.5t9.5 -22.5zM1792 896q0 -14 -9 -23l-320 -320q-9 -9 -23 -9 q-13 0 -22.5 9.5t-9.5 22.5v192h-1376q-13 0 -22.5 9.5t-9.5 22.5v192q0 13 9.5 22.5t22.5 9.5h1376v192q0 14 9 23t23 9q12 0 24 -10l319 -319q9 -9 9 -23z"/></svg></span><span class="abs" style="left:65.5px;top:0">1</span></span></div>
</div>

</body>
</html>
